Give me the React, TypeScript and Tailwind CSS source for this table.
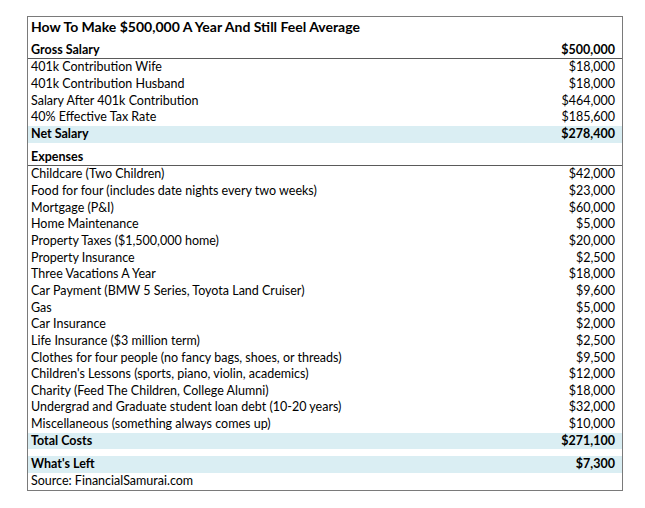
const income: [string, string][] = [
  ["401k Contribution Wife", "$18,000"],
  ["401k Contribution Husband", "$18,000"],
  ["Salary After 401k Contribution", "$464,000"],
  ["40% Effective Tax Rate", "$185,600"],
];

const expenses: [string, string][] = [
  ["Childcare (Two Children)", "$42,000"],
  ["Food for four (includes date nights every two weeks)", "$23,000"],
  ["Mortgage (P&I)", "$60,000"],
  ["Home Maintenance", "$5,000"],
  ["Property Taxes ($1,500,000 home)", "$20,000"],
  ["Property Insurance", "$2,500"],
  ["Three Vacations A Year", "$18,000"],
  ["Car Payment (BMW 5 Series, Toyota Land Cruiser)", "$9,600"],
  ["Gas", "$5,000"],
  ["Car Insurance", "$2,000"],
  ["Life Insurance ($3 million term)", "$2,500"],
  ["Clothes for four people (no fancy bags, shoes, or threads)", "$9,500"],
  ["Children's Lessons (sports, piano, violin, academics)", "$12,000"],
  ["Charity (Feed The Children, College Alumni)", "$18,000"],
  ["Undergrad and Graduate student loan debt (10-20 years)", "$32,000"],
  ["Miscellaneous (something always comes up)", "$10,000"],
];

function Row({
  label,
  value,
  bold,
  shaded,
  rule,
}: {
  label: string;
  value?: string;
  bold?: boolean;
  shaded?: boolean;
  rule?: boolean;
}) {
  return (
    <div
      className={`flex h-[16.67px] items-center justify-between pl-[3px] pr-[7px] leading-[16.67px] ${
        bold ? "font-bold" : ""
      } ${shaded ? "bg-[#daeef3]" : ""} ${rule ? "border-b border-[#5a5a5a]" : ""}`}
    >
      <span>{label}</span>
      {value && <span>{value}</span>}
    </div>
  );
}

export default function App() {
  return (
    <div className="w-[645px] h-[508px] bg-white pt-[16px] pl-[27px]">
      <div className="w-[596px] border border-[#7a7a7a] text-[12.5px] text-black font-['Lato',sans-serif]">
        {/* title */}
        <div className="h-[25.7px] pl-[3px] text-[14px] font-bold leading-[20px]">
          How To Make $500,000 A Year And Still Feel Average
        </div>

        <Row label="Gross Salary" value="$500,000" bold rule />
        {income.map(([l, v]) => (
          <Row key={l} label={l} value={v} />
        ))}
        <Row label="Net Salary" value="$278,400" bold shaded />

        <div className="h-[7px]" />

        <Row label="Expenses" bold rule />
        {expenses.map(([l, v]) => (
          <Row key={l} label={l} value={v} />
        ))}
        <Row label="Total Costs" value="$271,100" bold shaded />

        <div className="h-[7px]" />

        <Row label="What's Left" value="$7,300" bold shaded />
        <Row label="Source: FinancialSamurai.com" />
      </div>
    </div>
  );
}
